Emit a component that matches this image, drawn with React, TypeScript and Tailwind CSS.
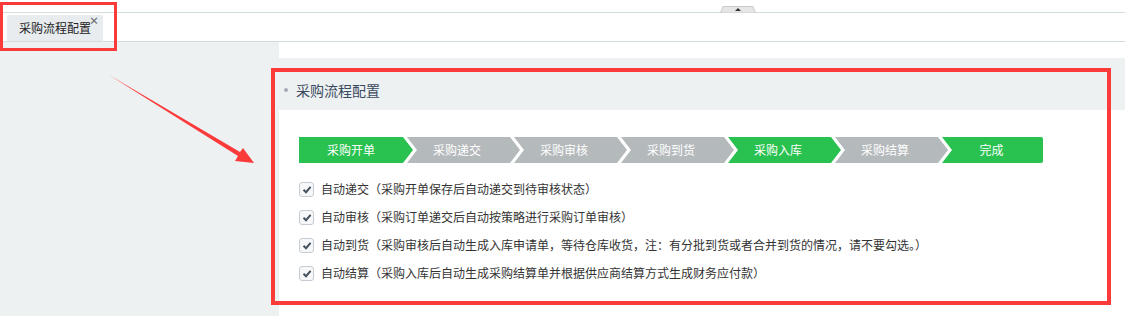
const steps = [
  { label: "采购开单", done: true },
  { label: "采购递交", done: false },
  { label: "采购审核", done: false },
  { label: "采购到货", done: false },
  { label: "采购入库", done: true },
  { label: "采购结算", done: false },
  { label: "完成", done: true },
];

const options = [
  { name: "自动递交", note: "（采购开单保存后自动递交到待审核状态）" },
  { name: "自动审核", note: "（采购订单递交后自动按策略进行采购订单审核）" },
  {
    name: "自动到货",
    note: "（采购审核后自动生成入库申请单，等待仓库收货，注：有分批到货或者合并到货的情况，请不要勾选。）",
  },
  { name: "自动结算", note: "（采购入库后自动生成采购结算单并根据供应商结算方式生成财务应付款）" },
];

const StepBar = () => {
  return (
    <div className="flex h-[26px]">
      {steps.map((s, i) => {
        const first = i === 0;
        const last = i === steps.length - 1;
        let shape = "w-[113px] ml-[-6px] pr-[13px] [clip-path:polygon(0_0,103px_0,100%_50%,103px_100%,0_100%,10px_50%)]";
        if (first) shape = "w-[114px] pr-[10px] [clip-path:polygon(0_0,104px_0,100%_50%,104px_100%,0_100%)]";
        if (last) shape = "w-[101px] ml-[-6px] pr-[2px] rounded-r-[2px] [clip-path:polygon(0_0,100%_0,100%_100%,0_100%,10px_50%)]";
		return (
          <div
            key={s.label}
            className={`${shape} ${s.done ? "bg-[#29c14f]" : "bg-[#b4b9bb]"} flex items-center justify-center text-[12px] text-white`}
          >
            {s.label}
          </div>
        );
      })}
    </div>
  );
};

const CheckRow = ({ name, note }: { name: string; note: string }) => {
  return (
    <div className="flex h-[28px] items-center">
      <span className="flex h-[15px] w-[15px] items-center justify-center rounded-[3px] border border-[#c6ccd1] bg-[#f6f7f8]">
        <svg width="10" height="9" viewBox="0 0 10 9">
          <path d="M1.5 4.8 L4 7.2 L8.6 1.8" fill="none" stroke="#46515e" strokeWidth="2" />
        </svg>
      </span>
      <span className="ml-[7px] text-[12px] text-[#333]">
        {name}
        {note}
      </span>
    </div>
  );
};

const App = () => {
  return (
    <div className="relative h-[316px] w-[1125px] overflow-hidden bg-white font-['Noto_Sans_CJK_SC',sans-serif]">
      {/* top strip with collapse handle */}
      <div className="relative h-[13px] border-b border-[#d3dcdc]">
        <svg className="absolute left-[720px] top-[6px]" width="36" height="7" viewBox="0 0 36 7">
          <polygon points="3,0.5 33,0.5 35.5,7 0.5,7" fill="#e6e6e6" stroke="#c9c9c9" />
          <polygon points="18,2 21,5 15,5" fill="#333" />
        </svg>
      </div>

      {/* tab bar */}
      <div className="h-[29px] border-b border-[#d3dcdc] pl-[7px] pt-[2px]">
        <div className="relative flex h-[26px] w-[96px] items-center rounded-t-[2px] bg-[#e8ecef] pl-[12px] text-[12px] text-[#222]">
          采购流程配置
          <span className="absolute right-[4px] top-[1px] text-[10px] font-bold leading-none text-[#666]">×</span>
        </div>
      </div>

      {/* body */}
      <div className="flex h-[274px]">
        <div className="w-[279px] bg-[#eef1f2]" />
        <div className="flex flex-1 flex-col">
          <div className="h-[16px] bg-white" />
          <div className="flex h-[52px] items-start bg-[#eef1f2] pl-[5px] pt-[22px]">
            <span className="mt-[8px] h-[4px] w-[4px] rounded-full bg-[#a3abb3]" />
            <span className="ml-[8px] text-[14px] leading-[20px] text-[#3a4a60]">采购流程配置</span>
          </div>
          <div className="flex-1 bg-white pl-[20px] pt-[27px]">
            <StepBar />
            <div className="mt-[12px]">
              {options.map((o) => (
                <CheckRow key={o.name} name={o.name} note={o.note} />
              ))}
            </div>
          </div>
        </div>
      </div>

      {/* annotations */}
      <div className="pointer-events-none absolute left-0 top-[2px] h-[49px] w-[117px] border-[3px] border-[#fb3a3a]" />
      <div className="pointer-events-none absolute left-[271px] top-[68px] h-[237px] w-[840px] border-[4px] border-[#fb3a3a]" />
      <svg className="pointer-events-none absolute left-0 top-0" width="300" height="200" viewBox="0 0 300 200">
        <polygon points="109,75 240,152 243,148 254,163 235,161 238,156" fill="#fb3a3a" />
      </svg>
    </div>
  );
};

export default App;
